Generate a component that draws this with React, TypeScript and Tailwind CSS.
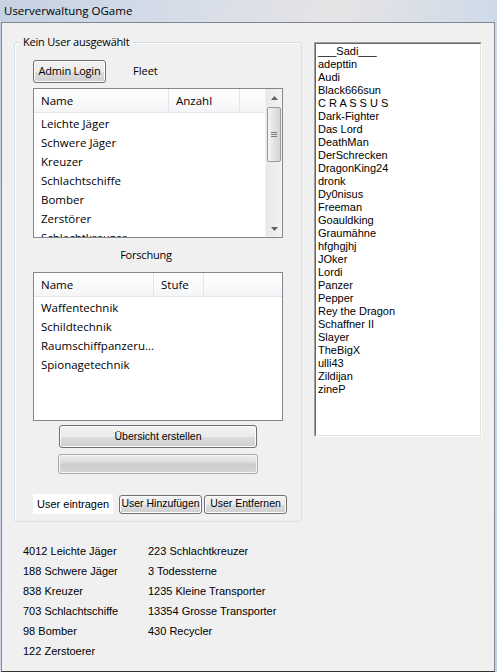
const SEGOE = "font-['Open_Sans',sans-serif]";
const MSS = "font-['Liberation_Sans',Arial,sans-serif]";

const FLEET = [
  'Leichte Jäger',
  'Schwere Jäger',
  'Kreuzer',
  'Schlachtschiffe',
  'Bomber',
  'Zerstörer',
  'Schlachtkreuzer',
];

const RESEARCH = ['Waffentechnik', 'Schildtechnik', 'Raumschiffpanzeru...', 'Spionagetechnik'];

const USERS = [
  '___Sadi___',
  'adepttin',
  'Audi',
  'Black666sun',
  'C R A S S U S',
  'Dark-Fighter',
  'Das Lord',
  'DeathMan',
  'DerSchrecken',
  'DragonKing24',
  'dronk',
  'Dy0nisus',
  'Freeman',
  'Goauldking',
  'Graumähne',
  'hfghgjhj',
  'JOker',
  'Lordi',
  'Panzer',
  'Pepper',
  'Rey the Dragon',
  'Schaffner II',
  'Slayer',
  'TheBigX',
  'ulli43',
  'Zildijan',
  'zineP',
];

const SUMMARY_LEFT = [
  '4012 Leichte Jäger',
  '188 Schwere Jäger',
  '838 Kreuzer',
  '703 Schlachtschiffe',
  '98 Bomber',
  '122 Zerstoerer',
];

const SUMMARY_RIGHT = [
  '223 Schlachtkreuzer',
  '3 Todessterne',
  '1235 Kleine Transporter',
  '13354 Grosse Transporter',
  '430 Recycler',
];

const BTN =
  'border border-[#707070] rounded-[3px] bg-[linear-gradient(to_bottom,#f2f2f2_0%,#ebebeb_50%,#dddddd_50%,#cfcfcf_100%)] shadow-[inset_0_0_0_1px_#fcfcfc] text-black flex items-center justify-center whitespace-nowrap';

function Header({ cols }: { cols: { label: string; w: string }[] }) {
  return (
    <div className="flex h-[24px] shrink-0 bg-[linear-gradient(to_bottom,#ffffff,#f4f5f7)] border-b border-[#e3e5e8]">
      {cols.map((c) => (
        <div
          key={c.label}
          className={`${c.w} h-full flex items-center pl-[7px] border-r border-[#e3e5e8] text-[11.5px] text-black`}
        >
          {c.label}
        </div>
      ))}
      <div className="flex-1" />
    </div>
  );
}

function Scrollbar() {
  return (
    <div className="w-[17px] h-full flex flex-col bg-[linear-gradient(to_right,#e8e8e8,#f3f3f3)] border-l border-[#f0f0f0]">
      <div className="h-[17px] flex items-center justify-center">
        <svg width="7" height="4" viewBox="0 0 7 4">
          <path d="M0 4 L3.5 0 L7 4 Z" fill="#606060" />
        </svg>
      </div>
      <div className="mt-[1px] mx-[1px] h-[55px] rounded-[2px] border border-[#9a9a9a] bg-[linear-gradient(to_right,#f4f4f4,#e3e3e3_50%,#d6d6d6)] flex flex-col items-center justify-center gap-[1px]">
        <div className="w-[6px] h-px bg-[#7a7a7a]" />
        <div className="w-[6px] h-px bg-[#7a7a7a]" />
        <div className="w-[6px] h-px bg-[#7a7a7a]" />
      </div>
      <div className="flex-1" />
      <div className="h-[17px] flex items-center justify-center">
        <svg width="7" height="4" viewBox="0 0 7 4">
          <path d="M0 0 L3.5 4 L7 0 Z" fill="#606060" />
        </svg>
      </div>
    </div>
  );
}

function Rows({ items }: { items: string[] }) {
  return (
    <div className="flex-1 overflow-hidden pt-[1px]">
      {items.map((it) => (
        <div key={it} className="h-[19px] flex items-center pl-[7px] text-[11.5px] text-black whitespace-nowrap">
          {it}
        </div>
      ))}
    </div>
  );
}

export default function App() {
  return (
    <div className="w-[497px] h-[672px] overflow-hidden flex flex-col bg-[linear-gradient(100deg,#c5d2e2_0%,#d6dde9_30%,#e6e4e6_55%,#cfdbe8_80%,#bfd3e6_100%)]">
      {/* title bar */}
      <div className={`h-[22px] shrink-0 flex items-center pl-[4px] pb-[1px] text-[11.5px] text-black ${SEGOE}`}>
        Userverwaltung OGame
      </div>

      {/* client */}
      <div className="ml-px w-[494px] h-[650px] shrink-0 border border-[#7d8894] border-b-[#2f3529] bg-[#f0f0f0] flex flex-col">
        <div className="flex pl-[12px] pt-[19px] gap-[12px]">
          {/* group box */}
          <div className={`relative w-[288px] h-[480px] border border-[#d5dfe5] rounded-[3px] shadow-[inset_1px_1px_0_#ffffff] flex flex-col ${SEGOE}`}>
            <span className="absolute left-[6px] top-[-9px] px-[2px] bg-[#f0f0f0] text-[11px] tracking-[-0.2px] leading-[16px] text-black">
              Kein User ausgewählt
            </span>

            <div className="flex items-center mt-[17px] ml-[18px]">
              <div className={`${BTN} w-[73px] h-[23px] text-[11px] tracking-[-0.2px]`}>Admin Login</div>
              <span className="ml-[27px] text-[11px] text-black">Fleet</span>
            </div>

            {/* fleet list */}
            <div className="mt-[5px] ml-[18px] w-[250px] h-[150px] border border-[#828790] bg-white flex">
              <div className="flex-1 flex flex-col min-w-0">
                <Header
                  cols={[
                    { label: 'Name', w: 'w-[135px]' },
                    { label: 'Anzahl', w: 'w-[71px]' },
                  ]}
                />
                <Rows items={FLEET} />
              </div>
              <Scrollbar />
            </div>

            <div className="mt-[9px] h-[16px] flex items-center justify-center text-[11px] tracking-[-0.2px] text-black pr-[24px]">
              Forschung
            </div>

            {/* research list */}
            <div className="mt-[9px] ml-[18px] w-[250px] h-[149px] border border-[#828790] bg-white flex flex-col">
              <Header
                cols={[
                  { label: 'Name', w: 'w-[120px]' },
                  { label: 'Stufe', w: 'w-[50px]' },
                ]}
              />
              <Rows items={RESEARCH} />
            </div>

            <div className={`${BTN} ${MSS} mt-[4px] ml-[44px] w-[198px] h-[23px] text-[10.5px]`}>Übersicht erstellen</div>

            <div className="mt-[6px] ml-[43px] w-[200px] h-[20px] rounded-[3px] border border-[#a8a8a8] bg-[linear-gradient(to_bottom,#eeeeee_0%,#e2e2e2_30%,#cdcdcd_55%,#d6d6d6_100%)] shadow-[inset_0_0_0_1px_#f5f5f5]" />

            <div className={`mt-[20px] ml-[18px] flex items-center ${MSS} text-[10.5px]`}>
              <div className="w-[80px] h-[20px] bg-white flex items-center pl-[4px] text-[11px] text-black whitespace-nowrap">User eintragen</div>
              <div className={`${BTN} ml-[6px] w-[83px] h-[19px]`}>User Hinzufügen</div>
              <div className={`${BTN} ml-[2px] w-[83px] h-[19px]`}>User Entfernen</div>
            </div>
          </div>

          {/* user listbox */}
          <div className="w-[168px] h-[395px] border border-[#a0a0a0] border-b-white border-r-white bg-[#f0f0f0]">
            <div className="w-full h-full border border-[#696969] border-b-[#e3e3e3] border-r-[#e3e3e3] bg-white p-[1px] pl-[2px]">
              {USERS.map((u) => (
                <div key={u} className={`h-[13px] leading-[13px] text-[11px] text-black whitespace-pre ${MSS}`}>
                  {u}
                </div>
              ))}
            </div>
          </div>
        </div>

        {/* summary */}
        <div className={`mt-[19px] ml-[21px] flex ${MSS} text-[11px] text-black`}>
          <div className="w-[125px] flex flex-col">
            {SUMMARY_LEFT.map((s) => (
              <div key={s} className="h-[20px] flex items-center">
                {s}
              </div>
            ))}
          </div>
          <div className="flex flex-col">
            {SUMMARY_RIGHT.map((s) => (
              <div key={s} className="h-[20px] flex items-center">
                {s}
              </div>
            ))}
          </div>
        </div>
      </div>
    </div>
  );
}
